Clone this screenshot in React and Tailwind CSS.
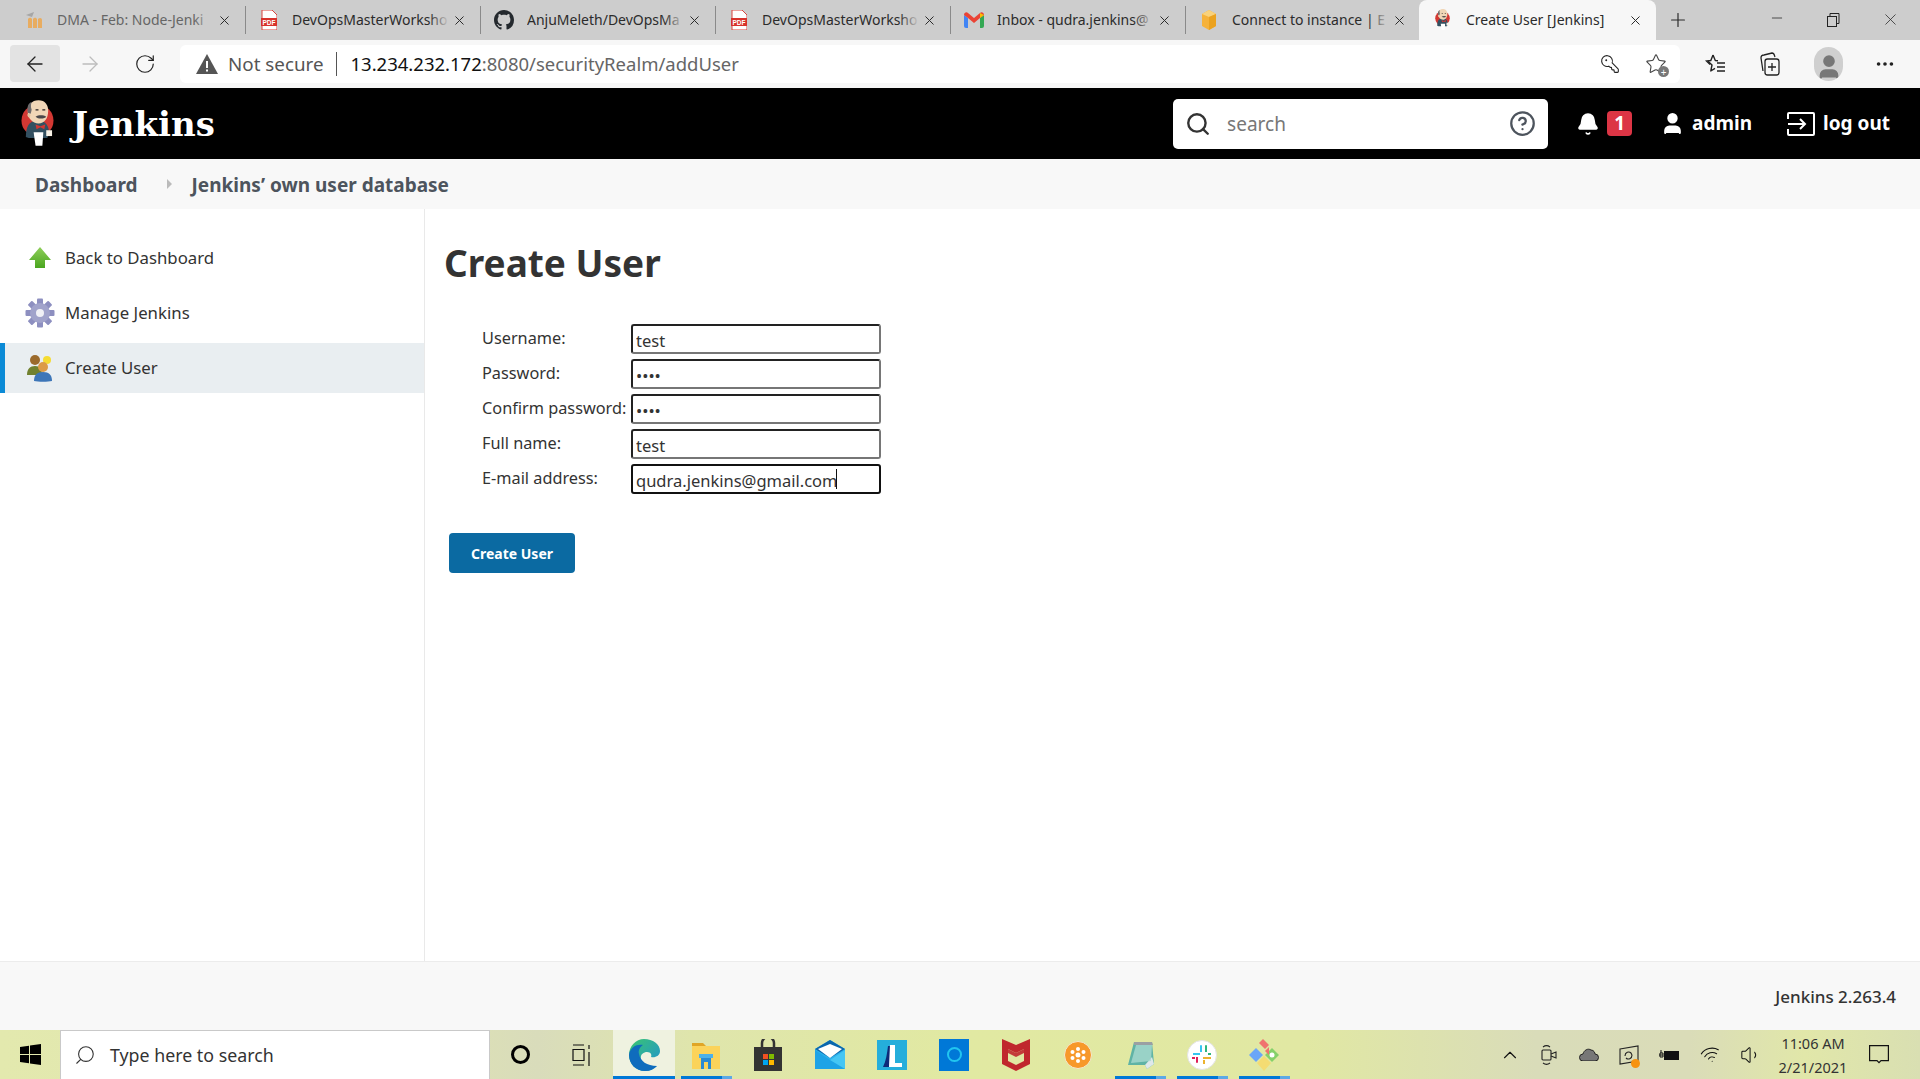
import { useState } from "react";
import { Search, Bell, CircleHelp, User, ArrowLeft, ArrowRight, RotateCw, KeyRound, Star, X, Plus, Minus, ChevronUp, Volume1, Wifi, MoreHorizontal } from "lucide-react";

function JenkinsLogo({ size = 34 }) {
    return (
        <svg width={size} height={size * 1.45} viewBox="0 0 34 49">
            <circle cx="17" cy="21" r="16.5" fill="#d33833" />
            <path d="M5 38c0-10 3-17 12-17s12 6 12 14l-2 4H8z" fill="#335061" />
            <path d="M7 12C7 5 11 0 18 0s10 5 10 11c0 8-4 13-10 13S7 19 7 12z" fill="#f0d6b7" />
            <path d="M7 13C6 8 7 3 11 2c-1 3-1 5 0 8l-1 4z" fill="#6d6b6d" />
            <path d="M7 14c-1 1 0 4 2 4l1-3z" fill="#e5c3a0" />
            <path d="M15 17c3-2 8-2 11 0-1 2-8 3-11 0z" fill="#49474a" />
            <path d="M15 10h3M22 10h3" stroke="#231f20" strokeWidth="1.200" />
            <path d="M15 25l5 2 5-2-1 5-4-2-4 2z" fill="#d33833" />
            <path d="M13 33h10l-1 14h-7z" fill="#fff" />
            <path d="M26 31h6v6h-6z" fill="#f7f1e6" />
        </svg>
    );
}

function Pdf() {
    return (
        <svg width="16" height="20" viewBox="0 0 16 20">
            <path d="M1 0h10l5 5v15H1z" fill="#fff" stroke="#d8453e" />
            <rect x="0" y="8" width="16" height="8" fill="#d8322c" />
            <text x="8" y="14.500" fontSize="6.500" fontWeight="700" fill="#fff" textAnchor="middle" fontFamily="Liberation Sans">PDF</text>
        </svg>
    );
}

function Github() {
    return (
        <svg width="20" height="20" viewBox="0 0 16 16" fill="#24292e">
            <path d="M8 0C3.58 0 0 3.58 0 8c0 3.54 2.29 6.53 5.47 7.59.4.07.55-.17.55-.38 0-.19-.01-.82-.01-1.49-2.01.37-2.53-.49-2.69-.94-.09-.23-.48-.94-.82-1.13-.28-.15-.68-.52-.01-.53.63-.01 1.08.58 1.23.82.72 1.21 1.87.87 2.33.66.07-.52.28-.87.51-1.07-1.78-.2-3.64-.89-3.64-3.95 0-.87.31-1.59.82-2.15-.08-.2-.36-1.02.08-2.12 0 0 .67-.21 2.2.82.64-.18 1.32-.27 2-.27s1.36.09 2 .27c1.53-1.04 2.2-.82 2.2-.82.44 1.1.16 1.92.08 2.12.51.56.82 1.27.82 2.15 0 3.07-1.87 3.75-3.65 3.95.29.25.54.73.54 1.48 0 1.07-.01 1.93-.01 2.2 0 .21.15.46.55.38A8.01 8.01 0 0016 8c0-4.42-3.58-8-8-8z" />
        </svg>
    );
}

function Gmail() {
    return (
        <svg width="20" height="16" viewBox="0 0 20 16">
            <path d="M0 3v11a2 2 0 002 2h2V6z" fill="#4285f4" />
            <path d="M16 6v10h2a2 2 0 002-2V3z" fill="#34a853" />
            <path d="M0 3c0-3 3-3.500 4-2l6 5 6-5c1-1.500 4-1 4 2l-4 3-6 5-6-5z" fill="#ea4335" />
            <path d="M16 1l4 2-4 3z" fill="#fbbc04" />
        </svg>
    );
}

function Moodle() {
    return (
        <svg width="18" height="16" viewBox="0 0 18 16" opacity=".75">
            <path d="M1 3l8-3-2 5z" fill="#999" />
            <path d="M3 16V7c2-2 3-1 4 0v9zM8 16V7c2-2 3-1 4 0v9zM13 16V7c2-2 4-1 4 1v8z" fill="#f2a23c" />
        </svg>
    );
}

function AwsBox() {
    return (
        <svg width="18" height="22" viewBox="0 0 18 22">
            <path d="M2 5l7-4 7 4v12l-7 4-7-4z" fill="#f6b23a" />
            <path d="M9 1l7 4-7 3-7-3z" fill="#f9d27c" />
            <path d="M9 8v13l7-4V5z" fill="#eba21f" />
        </svg>
    );
}

const tabs = [
    { title: "DMA - Feb: Node-Jenki", icon: <Moodle />, dim: true },
    { title: "DevOpsMasterWorksho", icon: <Pdf /> },
    { title: "AnjuMeleth/DevOpsMa", icon: <Github /> },
    { title: "DevOpsMasterWorksho", icon: <Pdf /> },
    { title: "Inbox - qudra.jenkins@", icon: <Gmail /> },
    { title: "Connect to instance | E", icon: <AwsBox /> },
];

function TabStrip() {
    return (
        <div className="flex h-10 bg-[#cdcdcd] pl-[10px] text-[14px] text-[#2b2b2b]">
            {tabs.map((tab, i) => (
                <div key={i} className="flex w-[235px] items-center pl-[13px]">
                    <div className="flex w-[22px] shrink-0 justify-center">{tab.icon}</div>
                    <div className="relative ml-[12px] w-[157px] -translate-y-px overflow-hidden whitespace-nowrap">
                        <span className={tab.dim ? "text-[#666]" : ""}>{tab.title}</span>
                        <div className="absolute right-0 top-0 h-full w-5 bg-gradient-to-r from-transparent to-[#cdcdcd]" />
                    </div>
                    <X className="ml-[3px] shrink-0" size={15} strokeWidth={1.6} />
                    {i < 5 && <div className="ml-auto h-[28px] w-px translate-x-px bg-[#8a8a8a]" />}
                </div>
            ))}
            <div className="ml-[-1px] flex w-[237px] items-center rounded-t-lg bg-[#f7f7f7] pl-[16px]">
                <JenkinsLogo size={15} />
                <span className="ml-[16px] w-[146px] -translate-y-px whitespace-nowrap">Create User [Jenkins]</span>
                <X className="ml-[16px]" size={15} strokeWidth={1.6} />
            </div>
            <Plus className="ml-[11px] mt-[9px]" size={22} strokeWidth={1.3} />
            <Minus className="ml-[80px] mt-[10px]" size={16} strokeWidth={1.2} />
            <svg className="ml-[41px] mt-[13px]" width="14" height="14" viewBox="0 0 14 14" fill="none" stroke="#222">
                <rect x="1.500" y="3.500" width="9" height="10" />
                <path d="M4 3V.5h9v10h-2.500" />
            </svg>
            <X className="ml-[41px] mt-[10px]" size={19} strokeWidth={1} />
        </div>
    );
}

function Favorites() {
    return (
        <svg width="24" height="24" viewBox="0 0 24 24" fill="none" stroke="#222" strokeWidth="1.400">
            <path d="M9 3l2.300 5.500 2.700.3M4 9.200l4 3.800-1.200 6 4.200-2.600M13 11h8M13 15h8M13 19h8" strokeLinejoin="round" />
            <path d="M9 3L6.800 8.500 2.500 9l3.600 3.600" />
        </svg>
    );
}

function Collections() {
    return (
        <svg width="24" height="26" viewBox="0 0 24 26" fill="none" stroke="#222" strokeWidth="1.300">
            <path d="M5 20L3 7c0-2 1-3 3-3l8-2c2 0 2 1 3 4" />
            <rect x="7" y="8" width="14" height="16" rx="2.500" />
            <path d="M14 12v8M10 16h8" />
        </svg>
    );
}

function Toolbar() {
    return (
        <div className="flex h-12 items-start bg-[#f7f7f7] pl-[10px] pt-[5px]">
            <div className="flex h-[37px] w-[50px] items-center justify-center rounded-sm bg-[#e3e3e3]">
                <ArrowLeft size={24} strokeWidth={1.3} color="#222" />
            </div>
            <div className="flex h-[37px] w-[60px] items-center justify-center">
                <ArrowRight size={24} strokeWidth={1.3} color="#bdbdbd" />
            </div>
            <div className="flex h-[37px] w-[50px] items-center justify-center">
                <RotateCw size={22} strokeWidth={1.3} color="#222" />
            </div>
            <div className="ml-[10px] flex h-[38px] w-[1500px] items-center rounded-md bg-white pl-[16px]">
                <svg width="22" height="20" viewBox="0 0 22 20">
                    <path d="M11 0l11 20H0z" fill="#555" />
                    <path d="M10 7h2v7h-2zM10 15.500h2v2h-2z" fill="#fff" />
                </svg>
                <span className="ml-[10px] text-[18.800px] text-[#555]">Not secure</span>
                <span className="mx-[13px] h-[24px] w-px bg-[#555]" />
                <span className="text-[18.500px] text-[#111]">13.234.232.172</span>
                <span className="text-[18.500px] text-[#666]">:8080/securityRealm/addUser</span>
                <KeyRound className="ml-auto -scale-x-100" size={20} strokeWidth={1.3} color="#222" />
                <div className="relative ml-[25px] mr-[13px]">
                    <Star size={22} strokeWidth={1.2} color="#444" />
                    <div className="absolute -bottom-[2px] -right-[2px] flex h-[11px] w-[11px] items-center justify-center rounded-full bg-[#777] text-[10px] leading-none text-white">+</div>
                </div>
            </div>
            <div className="ml-[24px] mt-[7px]"><Favorites /></div>
            <div className="ml-[30px] mt-[6px]"><Collections /></div>
            <div className="ml-[32px] mt-[2px] flex h-[34px] w-[29px] items-end justify-center overflow-hidden rounded-full bg-[#cfcfcf]">
                <User size={28} fill="#777" color="#777" />
            </div>
            <MoreHorizontal className="ml-[31px] mt-[8px]" size={22} color="#222" />
        </div>
    );
}

function SiteHeader() {
    return (
        <header className="flex h-[71px] items-center bg-black pl-[21px] text-white">
            <JenkinsLogo size={33} />
            <span className="ml-[18px] font-['DejaVu_Serif',serif] text-[34px] font-bold leading-none">Jenkins</span>
            <div className="ml-auto flex h-[50px] w-[375px] items-center rounded-[5px] bg-white pl-[12px] pr-[12px]">
                <Search size={26} strokeWidth={2.2} color="#333" className="shrink-0" />
                <span className="ml-[16px] translate-y-px text-[19px] text-[#777]">search</span>
                <CircleHelp className="ml-auto" size={27} strokeWidth={2} color="#4d545d" />
            </div>
            <Bell className="ml-[28px]" size={24} fill="#fff" strokeWidth={1.6} />
            <span className="ml-[7px] flex h-[25px] w-[25px] items-center justify-center rounded-[4px] bg-[#dc3545] text-[19px] font-bold">1</span>
            <User className="ml-[28px]" size={25} fill="#fff" strokeWidth={2} />
            <span className="ml-[7px] text-[19px] font-bold">admin</span>
            <svg className="ml-[35px]" width="28" height="24" viewBox="0 0 28 24" fill="none" stroke="#fff" strokeWidth="2">
                <path d="M1 7V2a1 1 0 011-1h24a1 1 0 011 1v20a1 1 0 01-1 1H2a1 1 0 01-1-1v-5" />
                <path d="M1 12h17M13 7l5 5-5 5" />
            </svg>
            <span className="ml-[8px] mr-[30px] text-[19px] font-bold">log out</span>
        </header>
    );
}

function Breadcrumb() {
    return (
        <nav className="flex h-[50px] items-center bg-[#f8f8f8] pl-[35px] text-[19px] font-bold text-[#4d545d]">
            <span className="translate-y-px">Dashboard</span>
            <span className="ml-[29px] h-0 w-0 border-y-[5px] border-l-[5px] border-y-transparent border-l-[#bbb]" />
            <span className="ml-[20px] translate-y-px">Jenkins’ own user database</span>
        </nav>
    );
}

function ArrowIcon() {
    return (
        <svg width="24" height="24" viewBox="0 0 24 24">
            <defs>
                <linearGradient id="g" x1="0" y1="0" x2="0" y2="1">
                    <stop offset="0" stopColor="#8fcf5a" />
                    <stop offset="1" stopColor="#4aa51f" />
                </linearGradient>
            </defs>
            <path d="M12 1L23 14h-6v8H7v-8H1z" fill="url(#g)" />
        </svg>
    );
}

function GearIcon() {
    const teeth = [0, 45, 90, 135, 180, 225, 270, 315];
    return (
        <svg width="30" height="30" viewBox="0 0 30 30">
            {teeth.map((a) => (
                <rect key={a} x="12" y="0.500" width="6" height="8" rx="1" fill="#8d8fc0" transform={`rotate(${a} 15 15)`} />
            ))}
            <circle cx="15" cy="15" r="10" fill="#a1a3cb" />
            <circle cx="15" cy="15" r="4" fill="#f1f1f6" />
        </svg>
    );
}

function UsersIcon() {
    return (
        <svg width="28" height="28" viewBox="0 0 28 28">
            <circle cx="9" cy="6" r="5" fill="#9b6a2c" />
            <path d="M1 21c0-6 3-9 8-9s7 3 7 9z" fill="#71812f" />
            <circle cx="21" cy="6" r="4" fill="#f5dc32" />
            <circle cx="17" cy="13" r="5" fill="#dc9b46" />
            <path d="M8 27c0-6 3-9 9-9s9 3 9 9c-4 1-14 1-18 0z" fill="#3d76b8" />
        </svg>
    );
}

function SideItem({ icon, label, active }) {
    return (
        <div className={"flex h-[50px] items-center border-l-[5px] " + (active ? "border-l-[#0b8ad6] bg-[#e9eef1]" : "border-l-transparent")}>
            <div className="ml-[20px] flex w-[30px] justify-center">{icon}</div>
            <span className="ml-[10px] text-[16.800px] text-[#333]">{label}</span>
        </div>
    );
}

function Sidebar() {
    return (
        <aside className="flex w-[425px] shrink-0 flex-col gap-[5px] border-r border-r-[#e9e9e9] pt-[24px]">
            <SideItem icon={<ArrowIcon />} label="Back to Dashboard" />
            <SideItem icon={<GearIcon />} label="Manage Jenkins" />
            <SideItem icon={<UsersIcon />} label="Create User" active />
        </aside>
    );
}

function Field({ label, value, type = "text", focused, caret }) {
    const [val, setVal] = useState(value);
    return (
        <div className="flex h-[30px] items-center">
            <label className="w-[149px] -translate-y-px whitespace-nowrap text-[16.300px] leading-none text-[#333]">{label}</label>
            <div className="relative">
                <input
                    type={type}
                    value={val}
                    onChange={(e) => setVal(e.target.value)}
                    className={
                        "h-[30px] w-[250px] rounded-[3px] border-2 bg-white px-[3px] pt-[3px] text-[16.500px] text-[#333] outline-none " +
                        (focused ? "border-[#111]" : "border-t-[#222] border-l-[#222] border-r-[#767676] border-b-[#767676]")
                    }
                />
                {caret && <div className="absolute left-[205px] top-[5px] h-[20px] w-px bg-[#111]" />}
            </div>
        </div>
    );
}

function CreateUserForm() {
    return (
        <main className="flex-1 pl-[19px] pt-[28px]">
            <h1 className="text-[37px] font-bold leading-[52px] text-[#333]">Create User</h1>
            <div className="ml-[38px] mt-[35px] flex flex-col gap-[5px]">
                <Field label="Username:" value="test" />
                <Field label="Password:" value="test" type="password" />
                <Field label="Confirm password:" value="test" type="password" />
                <Field label="Full name:" value="test" />
                <Field label="E-mail address:" value="qudra.jenkins@gmail.com" focused caret />
            </div>
            <button className="ml-[5px] mt-[39px] h-10 w-[126px] rounded-[4px] bg-[#0b6aa2] text-[14px] font-bold text-white">Create User</button>
        </main>
    );
}

function Underline({ lit }) {
    return (
        <div className={"absolute bottom-0 flex h-[3px] " + (lit ? "left-0 w-full" : "left-[6px] w-[51px]")}>
            <div className="flex-1 bg-[#0078d7]" />
            {!lit && <div className="w-[10px] bg-[#5ca9e6]" />}
        </div>
    );
}

function TaskButton({ children, active, lit }) {
    return (
        <div className={"relative flex h-full w-[62px] items-center justify-center " + (lit ? "bg-[#eff2e0]" : "")}>
            {children}
            {active && <Underline lit={lit} />}
        </div>
    );
}

function Taskbar() {
    return (
        <div className="flex h-[49px] items-center bg-[linear-gradient(90deg,#e3e9ae_0%,#dfe4b0_20%,#d9dcbb_28%,#dfe5ac_36%,#e1e9a2_50%,#e1e8a3_68%,#d9dcb9_80%,#dadcb8_88%,#e1e7a9_94%,#d9dfb2_100%)] text-[#111]">
            <div className="flex h-full w-[60px] items-center justify-center">
                <svg width="21" height="21" viewBox="0 0 21 21" fill="#000">
                    <path d="M0 3l9-1.300V10H0zM10 1.500L21 0v10H10zM0 11h9v8.300L0 18zM10 11h11v10l-11-1.500z" />
                </svg>
            </div>
            <div className="flex h-full w-[430px] items-center border-x border-t border-[#c9c9c9] bg-white pl-[13px] text-[17.800px] text-[#333]">
                <Search className="-scale-x-100" size={22} strokeWidth={1.2} />
                <span className="ml-[14px]">Type here to search</span>
            </div>
            <div className="flex h-full w-[60px] items-center justify-center">
                <div className="h-[19px] w-[19px] rounded-full border-[3px] border-black" />
            </div>
            <div className="flex h-full w-[63px] items-center justify-center">
                <svg width="20" height="22" viewBox="0 0 20 22" fill="none" stroke="#111" strokeWidth="1.200">
                    <path d="M1 1h11M1 21h11M1 5.500h11v11H1zM17 1v4M17 8v14" />
                </svg>
            </div>
            <TaskButton active lit>
                <svg width="31" height="32" viewBox="0 0 31 32">
                    <defs>
                        <linearGradient id="e" x1="0" y1="0" x2="1" y2="1">
                            <stop offset="0" stopColor="#3bc66e" />
                            <stop offset="1" stopColor="#1d90d8" />
                        </linearGradient>
                    </defs>
                    <path d="M15 0C7 0 0 7 0 16c0 9 7 16 16 16 5 0 9-2 12-5-6 2-15 1-16-7-1-5 3-7 6-7 4 0 5 3 4 5 4 1 9-1 9-6C31 5 24 0 15 0z" fill="url(#e)" />
                    <path d="M0 16C1 8 8 5 14 6c-3 2-5 5-4 9 1 7 8 12 18 12-3 3-7 5-12 5C7 32 0 25 0 16z" fill="#0f6cbd" />
                </svg>
            </TaskButton>
            <TaskButton active>
                <svg width="30" height="30" viewBox="0 0 30 30">
                    <path d="M1 3h11l3 3H1z" fill="#e0a526" />
                    <path d="M1 6h28v23H1z" fill="#fbd35a" />
                    <path d="M10 29V17h10v12h-3v-7h-4v7z" fill="#2a8bd4" />
                    <path d="M8 14h14v4H8z" fill="#4db1ea" />
                </svg>
            </TaskButton>
            <TaskButton>
                <svg width="30" height="32" viewBox="0 0 30 32">
                    <path d="M9 8V4a6 6 0 0112 0v4" fill="none" stroke="#333" strokeWidth="2.500" />
                    <path d="M1 8h28v24H1z" fill="#333" />
                    <path d="M10 15h5v5h-5z" fill="#f25022" />
                    <path d="M16 15h5v5h-5z" fill="#7fba00" />
                    <path d="M10 21h5v5h-5z" fill="#00a4ef" />
                    <path d="M16 21h5v5h-5z" fill="#ffb900" />
                </svg>
            </TaskButton>
            <TaskButton>
                <svg width="30" height="29" viewBox="0 0 30 29">
                    <path d="M0 9L15 0l15 9v20H0z" fill="#2cb1ea" />
                    <path d="M0 9L15 0l15 9-15 9z" fill="#0b67ad" />
                    <path d="M3 9l12-5 12 5-12 9z" fill="#fff" />
                    <path d="M0 10l15 10L30 10v19H0z" fill="#1ea3e6" />
                    <path d="M15 20l15-10v19z" fill="#45c6f4" />
                </svg>
            </TaskButton>
            <TaskButton>
                <div className="flex h-[30px] w-[30px] items-center justify-center bg-[#25aedb]">
                    <svg width="30" height="30" viewBox="0 0 30 30">
                        <path d="M6 27c3-6 4-13 5-21h2c0 8 0 16-1 21z" fill="#0e2a78" />
                        <path d="M13 5h5v18h7v4H12z" fill="#fff" />
                    </svg>
                </div>
            </TaskButton>
            <TaskButton>
                <div className="flex h-[32px] w-[30px] items-center justify-center bg-[#0078d7]">
                    <div className="h-[15px] w-[15px] rounded-full border-2 border-[#21c5f0]" />
                </div>
            </TaskButton>
            <TaskButton>
                <svg width="28" height="32" viewBox="0 0 28 32">
                    <path d="M0 0l14 6 14-6v25l-14 7-14-7z" fill="#c0272d" />
                    <path d="M6 10l8 4 8-4v12l-8 4-8-4z" fill="#e1e8a3" />
                    <path d="M6 10l8 4 8-4v4l-8 4-8-4z" fill="#c0272d" opacity=".9" />
                </svg>
            </TaskButton>
            <TaskButton>
                <div className="flex h-[28px] w-[28px] items-center justify-center rounded-full border border-[#f3ead0] bg-[#f7982a]">
                    <svg width="18" height="18" viewBox="0 0 18 18" fill="#fff">
                        <circle cx="9" cy="9" r="2.500" />
                        <circle cx="9" cy="3" r="2" />
                        <circle cx="9" cy="15" r="2" />
                        <circle cx="3.500" cy="6" r="2" />
                        <circle cx="14.500" cy="6" r="2" />
                        <circle cx="3.500" cy="12" r="2" />
                        <circle cx="14.500" cy="12" r="2" />
                    </svg>
                </div>
            </TaskButton>
            <TaskButton active>
                <svg width="28" height="30" viewBox="0 0 28 30">
                    <path d="M8 2h18l2 22-7 5-2-4H2z" fill="#5fb3a5" />
                    <path d="M8 2h18l1 3H8z" fill="#9aa0a3" />
                    <path d="M19 25l7-8 2 7-7 5z" fill="#dfe8ea" />
                    <path d="M10 5h16l-1 16-20 2z" fill="#a8d9cf" opacity=".8" />
                </svg>
            </TaskButton>
            <TaskButton active>
                <svg width="30" height="30" viewBox="0 0 30 30">
                    <circle cx="15" cy="15" r="14.500" fill="#fff" stroke="#e4e4e4" />
                    <path d="M9 17h2v5a1 1 0 01-2 0zM5 17h3v2H5z" fill="#e01e5a" />
                    <path d="M13 6a1 1 0 012 0v6h-2zM6 13h7v2H6z" fill="#36c5f0" />
                    <path d="M18 6a1 1 0 012 0v6h-2zM21 13h3v2h-3z" fill="#2eb67d" />
                    <path d="M16 17h8v2h-8zM16 20h2v4h-2z" fill="#ecb22e" />
                </svg>
            </TaskButton>
            <TaskButton active>
                <svg width="30" height="32" viewBox="0 0 30 32">
                    <path d="M0 16l7-7 7 7-7 7z" fill="#6ba6f7" />
                    <path d="M8 24l7-7 7 7-7 8z" fill="#f4dc72" />
                    <path d="M16 16l7-7 7 7-7 7z" fill="#85d16a" />
                    <circle cx="23" cy="16" r="2.500" fill="#fff" />
                    <path d="M10 4l4-4 6 6-4 4z" fill="#f0736f" />
                    <path d="M16 12l4-4v8z" fill="#f0736f" />
                </svg>
            </TaskButton>
            <div className="ml-auto flex h-full items-center">
                <ChevronUp size={22} strokeWidth={1.2} className="mr-[20px]" />
                <svg className="mr-[22px]" width="16" height="22" viewBox="0 0 16 22" fill="none" stroke="#222" strokeWidth="1.100">
                    <rect x="1" y="6" width="9" height="10" rx="1" />
                    <path d="M10 10l5-2v6l-5-2M2 3c2-1.500 5-1.500 7 0M2 19c2 1.500 5 1.500 7 0" />
                </svg>
                <svg className="mr-[20px]" width="20" height="13" viewBox="0 0 20 13">
                    <path d="M4 13a3.500 3.500 0 010-7C5 2 9 0 12 2c3 0 4 3 4 4a3.500 3.500 0 010 7z" fill="#777" stroke="#222" />
                </svg>
                <div className="relative mr-[20px]">
                    <svg width="20" height="20" viewBox="0 0 20 20" fill="none" stroke="#222" strokeWidth="1.100">
                        <path d="M1 4l18-3v15L1 19zM6 11c0-4 4-5 6-3l1 2M13 10c0 4-4 5-6 3" />
                    </svg>
                    <div className="absolute -bottom-[3px] -right-[1px] h-[9px] w-[9px] rounded-full bg-[#f7930f]" />
                </div>
                <svg className="mr-[21px]" width="20" height="14" viewBox="0 0 20 14">
                    <path d="M5 3h15v9H5z" fill="#111" />
                    <path d="M0 7h4M2 2v3M1 5h3v4H1z" stroke="#111" fill="none" />
                </svg>
                <Wifi className="mr-[19px] -rotate-[14deg]" size={21} strokeWidth={1.2} />
                <Volume1 className="mr-[10px]" size={22} strokeWidth={1.100} />
                <div className="flex w-[82px] flex-col items-center text-[14.500px] leading-[24px] text-[#333]">
                    <span>11:06 AM</span>
                    <span>2/21/2021</span>
                </div>
                <svg className="ml-[15px] mr-[31px]" width="20" height="20" viewBox="0 0 20 20" fill="none" stroke="#111" strokeWidth="1.200">
                    <path d="M.6.6h18.800v15H12l-2 2-2-2H.6z" />
                </svg>
            </div>
        </div>
    );
}

export default function App() {
    return (
        <div className="flex h-[1079px] flex-col overflow-hidden bg-white font-['Noto_Sans','Open_Sans',sans-serif]">
            <TabStrip />
            <Toolbar />
            <SiteHeader />
            <Breadcrumb />
            <div className="flex flex-1">
                <Sidebar />
                <CreateUserForm />
            </div>
            <footer className="flex h-[69px] items-center justify-end border-t border-t-[#ececec] bg-[#f8f8f8] pr-[24px] text-[17px] font-medium text-[#333]">
                <span className="translate-y-px">Jenkins 2.263.4</span>
            </footer>
            <Taskbar />
        </div>
    );
}
